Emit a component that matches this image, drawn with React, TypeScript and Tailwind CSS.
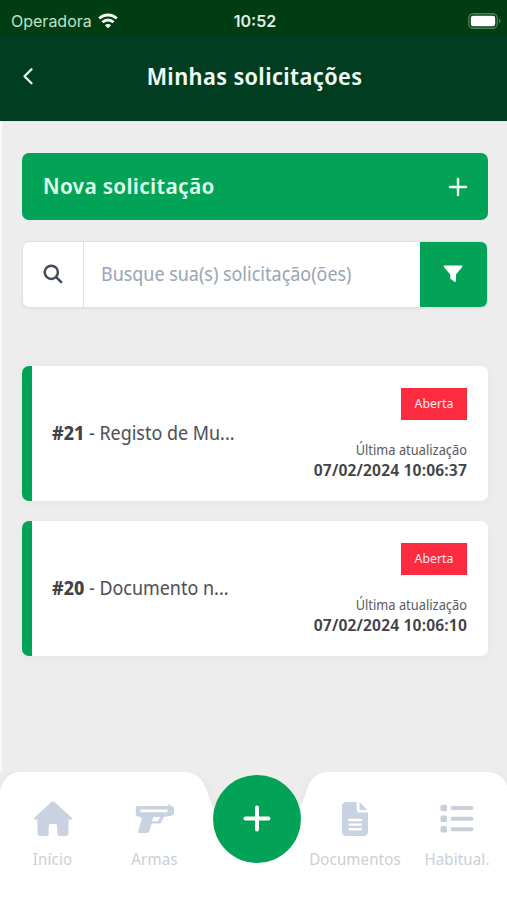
import type { ReactNode } from "react";

interface Solicitation {
  id: number;
  title: string;
  status: string;
  updatedAt: string;
}

const SOLICITATIONS: Solicitation[] = [
  { id: 21, title: "Registo de Mu...", status: "Aberta", updatedAt: "07/02/2024 10:06:37" },
  { id: 20, title: "Documento n...", status: "Aberta", updatedAt: "07/02/2024 10:06:10" },
];

function WifiIcon() {
  return (
    <svg width="20" height="16" viewBox="0 0 20 16" fill="none" stroke="#f4fbf6" strokeWidth="2.8">
      <path d="M1.2 5.6a12.6 12.6 0 0 1 17.6 0" />
      <path d="M4.5 9.2a8 8 0 0 1 11 0" />
      <path d="M10 15.2 6.9 12.2a4.4 4.4 0 0 1 6.2 0z" fill="#f4fbf6" stroke="none" />
    </svg>
  );
}

function BatteryIcon() {
  return (
    <svg width="33" height="16" viewBox="0 0 33 16" fill="none">
      <rect x="0.75" y="0.75" width="28.5" height="14.5" rx="4.5" stroke="#4c8061" strokeWidth="1.3" />
      <rect x="2.8" y="2.8" width="24.4" height="10.4" rx="2.3" fill="#fff" />
      <path d="M31 5.5c1.8.8 1.8 4.2 0 5z" fill="#4c8061" />
    </svg>
  );
}

function HomeIcon() {
  return (
    <svg width="40" height="36" viewBox="0 0 40 36" fill="#c9d2e1">
      <path d="M18.2 1.2q1.8-1.6 3.6 0L38.5 16.4q1.6 2.1-1.2 2.4H35.5V32q0 3-3 3H26.5q-2.2 0-2.2-2.2V25q0-2-2-2H17.7q-2 0-2 2v7.8q0 2.2-2.2 2.2H7.5q-3 0-3-3V18.8H2.7Q-.1 18.5 1.5 16.4z" />
    </svg>
  );
}

function GunIcon() {
  return (
    <svg width="40" height="32" viewBox="0 0 40 32" fill="#c9d2e1">
      <path
        fillRule="evenodd"
        d="M2.500 3H33.200V2q0-1 1-1t1 1v1h1.600Q39 3 39 5v5q0 2-2 2.400L32.500 13.500H29l-2.600 5.400q-.7 1.700-2.500 1.700H16.600L14.200 28.600q-.5 1.400-1.900 1.400H4.500q-1.800 0-1.300-1.800L6.800 16Q6.500 13.500 4 13.500H2.500Q.8 13.500 .8 11.800V4.700Q.8 3 2.500 3zM5.500 6.500v2.800H32.500V6.500zM18.500 14l-1.600 4.300H23l2.200-4.300z"
      />
    </svg>
  );
}

function DocumentIcon() {
  return (
    <svg width="28" height="36" viewBox="0 0 28 36">
      <path fill="#c9d2e1" d="M5.5 1H15.7v7.8q0 2.8 2.8 2.8H27V30.5q0 4.500-4.500 4.500h-17Q1 35 1 30.500v-25Q1 1 5.500 1z" />
      <path fill="#c9d2e1" d="M18.500 1v6.700q0 1.300 1.300 1.300H26.500z" />
      <path stroke="#fff" strokeWidth="2.4" strokeLinecap="round" d="M8.500 19h11.500M8.500 23.600h11.500M8.500 28.200h11.500" />
    </svg>
  );
}

function ListIcon() {
  return (
    <svg width="34" height="30" viewBox="0 0 34 30">
      <g fill="#c9cfd8">
        <rect x="0.5" y="0.8" width="6.500" height="6.500" rx="1.500" />
        <rect x="0.5" y="11.400" width="6.500" height="6.500" rx="1.500" />
        <rect x="0.5" y="22" width="6.500" height="6.500" rx="1.500" />
      </g>
      <path stroke="#c9cfd8" strokeWidth="4" strokeLinecap="round" d="M12.500 4.100h19M12.500 14.700h19M12.500 25.300h19" />
    </svg>
  );
}

function StatusBar() {
  return (
    <div className="grid h-9 grid-cols-3 items-center bg-[#003d12] pt-[6px] pr-[8px] pl-[11px] font-['Inter'] text-[16px] text-[#e0f1e4]">
      <div className="flex items-center gap-[6px]">
        <span className="text-[#bce3c8]">Operadora</span>
        <WifiIcon />
      </div>
      <span className="text-center font-semibold">10:52</span>
      <div className="-mr-[2px] flex justify-end">
        <BatteryIcon />
      </div>
    </div>
  );
}

function Header() {
  return (
    <header className="grid h-[85px] grid-cols-[60px_1fr_58px] items-center bg-[#003d21] pb-1">
      <button className="pb-[2px] pl-[22px]" aria-label="Voltar">
        <svg width="13" height="18" viewBox="0 0 13 18" fill="none" stroke="#e9f8ef" strokeWidth="2.3" strokeLinecap="round" strokeLinejoin="round">
          <path d="M9.5 2.2 2.5 9.2l7 7" />
        </svg>
      </button>
      <h1 className="text-center text-[23px] font-semibold tracking-[0.4px] whitespace-nowrap text-[#f1fbf4]">
        Minhas solicitações
      </h1>
    </header>
  );
}

function SearchBar() {
  return (
    <div className="mt-[21px] flex h-[67px] overflow-hidden rounded-[7px] border border-[#dde1e6] bg-white shadow-xs">
      <div className="flex w-[61px] items-center justify-center border-r border-[#dfe3e8] pb-px">
        <svg width="20" height="20" viewBox="0 0 20 20" fill="none" stroke="#414d5e" strokeWidth="2.5" strokeLinecap="round">
          <circle cx="8.3" cy="8.3" r="6.6" />
          <path d="m13.2 13.2 5 5" />
        </svg>
      </div>
      <div className="flex flex-1 items-center pb-px pl-[17px] text-[19px] whitespace-nowrap text-[#9ba6b6]">
        Busque sua(s) solicitação(ões)
      </div>
      <button className="-my-px flex w-[67px] items-center justify-center bg-[#03a357] pr-px pb-[2px]" aria-label="Filtrar">
        <svg width="20" height="18" viewBox="0 0 20 18" fill="#fff">
          <path d="M1.5.5h17q1.5.3.7 1.6L13 9.600V16q-.2 1.500-1.500.8L8 14.300q-.7-.5-.7-1.300V9.600L.8 2.100Q0 .8 1.500.5z" />
        </svg>
      </button>
    </div>
  );
}

function SolicitationCard({ item }: { item: Solicitation }) {
  return (
    <article className="flex h-[135px] overflow-hidden rounded-[7px] border-l-[10px] border-[#03a357] bg-white pr-[21px] pl-5 shadow-[0_2px_12px_rgba(0,0,0,0.035)]">
      <div className="flex flex-1 items-center text-[19px] whitespace-nowrap text-[#505257]">
        <p>
          <b className="text-[#404349]">#{item.id}</b> - {item.title}
        </p>
      </div>
      <div className="flex flex-col items-end pt-[22px]">
        <span className="flex h-8 w-[66px] items-center justify-center bg-[#fd2b40] text-[13px] text-[#ffe9ec]">
          {item.status}
        </span>
        <span className="mt-5 text-[13.6px] leading-5 text-[#5e6065]">Última atualização</span>
        <span className="text-[16.5px] leading-5 font-semibold tracking-[0.15px] text-[#404349]">{item.updatedAt}</span>
      </div>
    </article>
  );
}

function NavItem({ label, icon }: { label: string; icon: ReactNode }) {
  return (
    <div className="flex flex-col items-center text-[#ccd0d7]">
      <div className="flex h-9 items-center">{icon}</div>
      <span className="mt-[10px] text-[16px] leading-6 tracking-[0.1px] whitespace-nowrap">{label}</span>
    </div>
  );
}

function BottomNav() {
  return (
    <nav className="relative h-[128px]">
      <svg className="absolute inset-0" width="507" height="128" viewBox="0 0 507 128" fill="#fff">
        <path
          className="drop-shadow-[0_0_6px_rgba(0,0,0,0.04)]"
          d="M0 19C3 6 10 0 22 0H184C197 0 203 8 207 19C211 32 221 62 257 62C291 62 299 38 305 24C309 9 314 0 329 0H486C498 0 505 6 507 15V128H0z"
        />
      </svg>
      <div className="relative grid grid-cols-[105px_99px_105px_92px_112px] pt-[29px]">
        <NavItem label="Início" icon={<HomeIcon />} />
        <NavItem label="Armas" icon={<GunIcon />} />
        <button
          className="-mt-[26px] ml-[9px] flex size-[88px] items-center justify-center rounded-full bg-[#03a357]"
          aria-label="Nova solicitação"
        >
          <svg width="28" height="28" viewBox="0 0 28 28" stroke="#fff" strokeWidth="4" strokeLinecap="round">
            <path d="M14 2.500v22M2.500 13.500h23" />
          </svg>
        </button>
        <NavItem label="Documentos" icon={<DocumentIcon />} />
        <NavItem label="Habitual." icon={<ListIcon />} />
      </div>
    </nav>
  );
}

export default function App() {
  return (
    <div className="flex h-[900px] w-[507px] flex-col overflow-hidden bg-[#ededed] font-['Noto_Sans_Display','Noto_Sans',sans-serif]">
      <StatusBar />
      <Header />
      <main className="flex-1 rounded-tl-[4px] border-t border-l-2 border-t-[#dce8df] border-l-[#f9f9f9] pt-[31px] pr-[19px] pl-5">
        <button className="flex h-[67px] w-full items-center justify-between rounded-[7px] bg-[#03a357] pr-5 pl-[21px]">
          <span className="pb-[2px] text-[22px] font-semibold tracking-[0.3px] text-[#dcfbe9]">Nova solicitação</span>
          <svg width="20" height="20" viewBox="0 0 20 20" stroke="#effff5" strokeWidth="2.4" strokeLinecap="round">
            <path d="M10 2v16M2 10h16" />
          </svg>
        </button>
        <SearchBar />
        <div className="mt-[58px] flex flex-col gap-5">
          {SOLICITATIONS.map((item) => (
            <SolicitationCard key={item.id} item={item} />
          ))}
        </div>
      </main>
      <BottomNav />
    </div>
  );
}
